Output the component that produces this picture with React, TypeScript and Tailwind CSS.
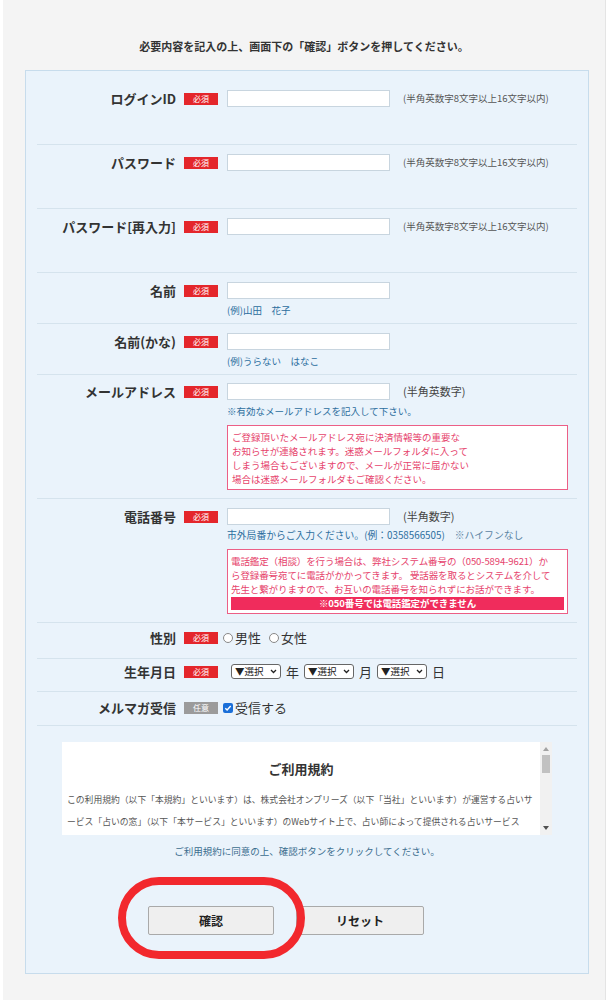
import React from "react"

const FONT = { fontFamily: '"Noto Sans CJK JP", "Noto Sans", sans-serif' }

function Badge({ optional = false }: { optional?: boolean }) {
  return (
    <span
      className={
        optional
          ? "ml-[8px] mt-[3px] block h-[12px] w-[34px] shrink-0 bg-[#9b9b9b] text-center text-[8px] leading-[12px] text-white"
          : "ml-[8px] mt-[3px] block h-[12px] w-[34px] shrink-0 bg-[#e4262b] text-center text-[8px] leading-[12px] text-white"
      }
    >
      {optional ? "任意" : "必須"}
    </span>
  )
}

function Label({ children }: { children: React.ReactNode }) {
  return (
    <div className="w-[139px] shrink-0 text-right text-[13px] font-bold leading-[17px] text-[#333]">
      {children}
    </div>
  )
}

function TextBox() {
  return <div className="h-[17px] w-[163px] shrink-0 border border-[#c8d5df] bg-white" />
}

function Select() {
  return (
    <div className="flex h-[15px] w-[50px] items-center justify-between rounded-[3px] border border-[#666] bg-white px-[3px] text-[9.5px] leading-none text-[#222]">
      <span>▼選択</span>
      <svg width="7" height="5" viewBox="0 0 7 5" fill="none">
        <path d="M1 1l2.5 2.5L6 1" stroke="#222" strokeWidth="1.3" />
      </svg>
    </div>
  )
}

function Radio({ label }: { label: string }) {
  return (
    <span className="flex items-center">
      <span className="block h-[10px] w-[10px] rounded-full border border-[#888] bg-white" />
      <span className="ml-[2px] text-[13px] leading-[17px] text-[#333]">{label}</span>
    </span>
  )
}

export default function App() {
  return (
    <div className="min-h-screen bg-white" style={FONT}>
      <div className="ml-[3px] min-h-[1000px] w-[603px] border-r border-[#e4e4e4] bg-[#f4f4f4] pt-[39px]">
        <p className="text-center text-[11px] font-bold leading-[14px] text-[#333]">
          必要内容を記入の上、画面下の「確認」ボタンを押してください。
        </p>

        {/* form panel */}
        <div className="mx-[22px] mt-[17px] w-[564px] border border-[#c7dcec] bg-[#eaf3fb] px-[11px] pb-[38px] pt-[10px]">
          {/* id / password */}
          {[
            "ログインID",
            "パスワード",
            "パスワード[再入力]",
          ].map((l) => (
            <div key={l} className="flex h-[64px] items-start border-b border-[#d5e3ed] pt-[9px]">
              <Label>{l}</Label>
              <Badge />
              <div className="ml-[9px] flex items-center">
                <TextBox />
                <span className="ml-[13px] text-[9.5px] leading-[17px] text-[#555]">
                  (半角英数字8文字以上16文字以内)
                </span>
              </div>
            </div>
          ))}

          {/* name */}
          <div className="flex h-[51px] items-start border-b border-[#d5e3ed] pt-[9px]">
            <Label>名前</Label>
            <Badge />
            <div className="ml-[9px]">
              <TextBox />
              <p className="mt-[4px] text-[9.5px] leading-[14px] text-[#2c6e9e]">(例)山田　花子</p>
            </div>
          </div>
          <div className="flex h-[51px] items-start border-b border-[#d5e3ed] pt-[9px]">
            <Label>名前(かな)</Label>
            <Badge />
            <div className="ml-[9px]">
              <TextBox />
              <p className="mt-[4px] text-[9.5px] leading-[14px] text-[#2c6e9e]">(例)うらない　はなこ</p>
            </div>
          </div>

          {/* mail */}
          <div className="flex items-start border-b border-[#d5e3ed] pb-[8px] pt-[8px]">
            <Label>メールアドレス</Label>
            <Badge />
            <div className="ml-[9px]">
              <div className="flex items-center">
                <TextBox />
                <span className="ml-[13px] text-[11px] leading-[17px] text-[#444]">(半角英数字)</span>
              </div>
              <p className="mt-[4px] text-[9.5px] leading-[14px] text-[#2c6e9e]">
                ※有効なメールアドレスを記入して下さい。
              </p>
              <div className="mt-[7px] h-[65px] w-[341px] whitespace-nowrap border border-[#ec5f86] bg-white px-[4px] pt-[4px] text-[9.5px] leading-[14px] text-[#e6436c]">
                ご登録頂いたメールアドレス宛に決済情報等の重要な
                <br />
                お知らせが連絡されます。迷惑メールフォルダに入って
                <br />
                しまう場合もございますので、メールが正常に届かない
                <br />
                場合は迷惑メールフォルダもご確認ください。
              </div>
            </div>
          </div>

          {/* tel */}
          <div className="flex items-start border-b border-[#d5e3ed] pb-[8px] pt-[9px]">
            <Label>電話番号</Label>
            <Badge />
            <div className="ml-[9px]">
              <div className="flex items-center">
                <TextBox />
                <span className="ml-[13px] text-[11px] leading-[17px] text-[#444]">(半角数字)</span>
              </div>
              <p className="mt-[3px] whitespace-nowrap text-[9.8px] leading-[14px] text-[#2c6e9e]">
                市外局番からご入力ください。(例：0358566505)
                <span className="ml-[10px] text-[#5a83a3]">※ハイフンなし</span>
              </p>
              <div className="mt-[7px] h-[65px] w-[341px] overflow-hidden whitespace-nowrap border border-[#ec5f86] bg-white px-[3px] pt-[4px] text-[9.5px] leading-[14px] tracking-[-0.1px] text-[#e6436c]">
                電話鑑定（相談）を行う場合は、弊社システム番号の（050-5894-9621）か
                <br />
                ら登録番号宛てに電話がかかってきます。 受話器を取るとシステムを介して
                <br />
                先生と繋がりますので、お互いの電話番号を知られずにお話ができます。
                <div className="mt-[1px] h-[13px] bg-[#f02c5c] text-center text-[9.5px] font-bold leading-[13px] text-white">
                  ※050番号では電話鑑定ができません
                </div>
              </div>
            </div>
          </div>

          {/* gender */}
          <div className="flex h-[36px] items-start border-b border-[#d5e3ed] pt-[6px]">
            <Label>性別</Label>
            <Badge />
            <div className="ml-[5px] flex items-center gap-[8px]">
              <Radio label="男性" />
              <Radio label="女性" />
            </div>
          </div>

          {/* birthday */}
          <div className="flex h-[33px] items-start border-b border-[#d5e3ed] pt-[4px]">
            <Label>生年月日</Label>
            <Badge />
            <div className="ml-[13px] flex h-[17px] items-center gap-[5px] text-[13px] text-[#333]">
              <Select />
              <span>年</span>
              <Select />
              <span>月</span>
              <Select />
              <span>日</span>
            </div>
          </div>

          {/* magazine */}
          <div className="flex h-[34px] items-start border-b border-[#d5e3ed] pt-[7px]">
            <Label>メルマガ受信</Label>
            <Badge optional />
            <div className="ml-[5px] flex h-[17px] items-center">
              <span className="flex h-[10px] w-[10px] items-center justify-center rounded-[2px] bg-[#1a6fd8]">
                <svg width="8" height="8" viewBox="0 0 8 8" fill="none">
                  <path d="M1.3 4.2l1.8 1.8 3.6-4" stroke="#fff" strokeWidth="1.4" />
                </svg>
              </span>
              <span className="ml-[2px] text-[13px] leading-[17px] text-[#333]">受信する</span>
            </div>
          </div>

          {/* terms */}
          <div className="mx-auto mt-[16px] flex h-[93px] w-[490px]">
            <div className="h-[93px] flex-1 overflow-hidden bg-white px-[5px] pt-[18px]">
              <h2 className="text-center text-[13px] font-bold leading-[18px] text-[#333]">ご利用規約</h2>
              <p className="mt-[11px] whitespace-nowrap text-[8.8px] leading-[22px] text-[#555]">
                この利用規約（以下「本規約」といいます）は、株式会社オンプリーズ（以下「当社」といいます）が運営する占いサ
                <br />
                ービス「占いの窓」（以下「本サービス」といいます）のWebサイト上で、占い師によって提供される占いサービス
                <br />
                の利用を希望される方が遵守すべき事項を定めています。ご利用を希望する方は、本規約に同意の上、ご利用いただきま
              </p>
            </div>
            <div className="relative w-[12px] bg-[#f1f1f1]">
              <svg className="absolute left-[3px] top-[5px]" width="6" height="4" viewBox="0 0 6 4">
                <path d="M3 0l3 4H0z" fill="#a3a3a3" />
              </svg>
              <div className="absolute left-[2px] top-[13px] h-[18px] w-[8px] bg-[#c1c1c1]" />
              <svg className="absolute bottom-[5px] left-[3px]" width="6" height="4" viewBox="0 0 6 4">
                <path d="M0 0h6L3 4z" fill="#505050" />
              </svg>
            </div>
          </div>

          <p className="mt-[9px] text-center text-[9.5px] leading-[14px] text-[#3a6d8e]">
            ご利用規約に同意の上、確認ボタンをクリックしてください。
          </p>

          {/* buttons */}
          <div className="mt-[48px] flex gap-[22px] pl-[111px]">
            <div className="relative">
              <button className="h-[29px] w-[126px] rounded-[2px] border border-[#a9a9a9] bg-[#efefef] text-[12px] font-bold text-[#222]">
                確認
              </button>
              <div className="pointer-events-none absolute left-[-30px] top-[-29px] z-10 h-[82px] w-[187px] rounded-[41px] border-[8px] border-[#f2282d]" />
            </div>
            <button className="h-[29px] w-[128px] rounded-[2px] border border-[#a9a9a9] bg-[#efefef] text-[12px] font-bold text-[#222]">
              リセット
            </button>
          </div>
        </div>
      </div>
    </div>
  )
}
